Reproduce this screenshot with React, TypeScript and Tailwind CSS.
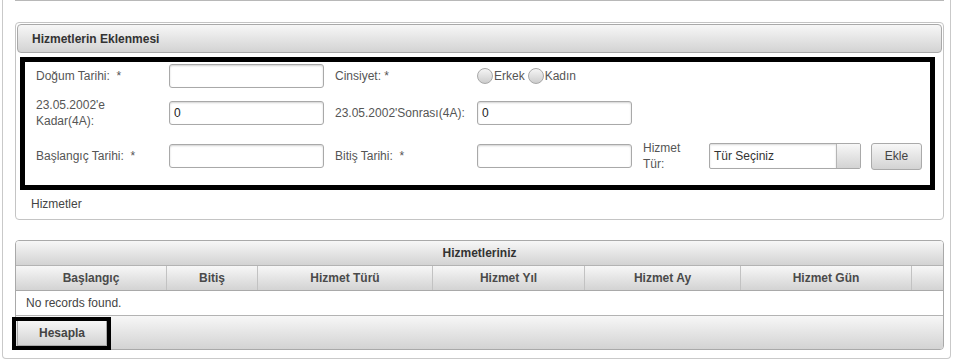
const grad = 'bg-linear-to-b from-[#f7f7f7] to-[#d3d3d3]';

function TextInput({ value }: { value?: string }) {
  return (
    <div className="flex h-[24px] w-[155px] items-center rounded-[3px] border border-[#a9a9a9] bg-white pl-[4px] text-[12px] text-[#222] shadow-[inset_0_1px_2px_rgba(0,0,0,0.18)]">
      {value}
    </div>
  );
}

function Label({ children, w, className = '' }: { children: React.ReactNode; w: string; className?: string }) {
  return <div className={`${w} ${className} whitespace-pre leading-[16px] text-[12px] text-[#555]`}>{children}</div>;
}

function Radio({ label }: { label: string }) {
  return (
    <div className="flex items-center">
      <span className="h-[16px] w-[16px] rounded-full border border-[#a8a8a8] bg-linear-to-b from-[#f5f5f5] to-[#cdcdcd]" />
      <span className="ml-px text-[12px] text-[#555]">{label}</span>
    </div>
  );
}

const columns = [
  { label: 'Başlangıç', w: 'w-[151px]' },
  { label: 'Bitiş', w: 'w-[91px]' },
  { label: 'Hizmet Türü', w: 'w-[175px]' },
  { label: 'Hizmet Yıl', w: 'w-[152px]' },
  { label: 'Hizmet Ay', w: 'w-[156px]' },
  { label: 'Hizmet Gün', w: 'w-[171px]' },
];

export default function App() {
  return (
    <div className="h-[360px] w-[960px] overflow-hidden bg-white font-['Liberation_Sans',Arial,sans-serif]">
      <div className="ml-[2px] h-[359px] w-[949px] rounded-b-[4px] border-x border-b border-[#c9c9c9]">
        {/* bottom edge of the panel above */}
        <div className="ml-[12px] h-px w-[929px] bg-[#b8b8b8]" />

        {/* Hizmetlerin Eklenmesi */}
        <div className="ml-[12px] mt-[21px] h-[198px] w-[929px] rounded-[4px] border border-[#c4c4c4] p-px">
          <div className={`flex h-[29px] items-center rounded-[4px] border border-[#a9a9a9] pl-[14px] text-[12px] font-bold text-[#333] ${grad}`}>
            Hizmetlerin Eklenmesi
          </div>

          <div className="ml-[3px] mt-[4px] h-[133px] w-[915px] border-[5px] border-black pl-[11px] pt-[2px]">
            <div className="flex h-[24px] items-center">
              <Label w="w-[133px]">{'Doğum Tarihi:  *'}</Label>
              <TextInput />
              <Label w="w-[142px]" className="ml-[11px]">{'Cinsiyet: *'}</Label>
              <div className="flex items-center gap-[3px]">
                <Radio label="Erkek" />
                <Radio label="Kadın" />
              </div>
            </div>

            <div className="mt-[9px] flex h-[32px] items-center">
              <Label w="w-[133px]">
                {"23.05.2002'e"}
                <br />
                {'Kadar(4A):'}
              </Label>
              <TextInput value="0" />
              <Label w="w-[142px]" className="ml-[11px]">{"23.05.2002'Sonrası(4A):"}</Label>
              <TextInput value="0" />
            </div>

            <div className="mt-[11px] flex h-[32px] items-center">
              <Label w="w-[133px]">{'Başlangıç Tarihi:  *'}</Label>
              <TextInput />
              <Label w="w-[142px]" className="ml-[11px]">{'Bitiş Tarihi:  *'}</Label>
              <TextInput />
              <Label w="w-[66px]" className="ml-[11px]">
                {'Hizmet'}
                <br />
                {'Tür:'}
              </Label>
              <div className="flex h-[26px] w-[152px] overflow-hidden rounded-[2px] border border-[#a9a9a9] bg-white">
                <div className="flex flex-1 items-center pl-[4px] text-[12px] text-[#333] shadow-[inset_0_1px_2px_rgba(0,0,0,0.15)]">
                  Tür Seçiniz
                </div>
                <div className={`w-[24px] border-l border-[#b5b5b5] ${grad}`} />
              </div>
              <button className={`ml-[10px] h-[27px] w-[51px] rounded-[3px] border border-[#aaaaaa] text-[12px] text-[#444] ${grad}`}>
                Ekle
              </button>
            </div>
          </div>

          <div className="mt-[6px] pl-[14px] text-[12px] leading-[16px] text-[#444]">Hizmetler</div>
        </div>

        {/* Hizmetleriniz */}
        <div className="relative ml-[12px] mt-[20px] flex h-[110px] w-[929px] flex-col rounded-[4px] border border-[#a9a9a9]">
          <div className={`flex h-[25px] items-center justify-center rounded-t-[3px] border-b border-[#b3b3b3] text-[12px] font-bold text-[#333] ${grad}`}>
            Hizmetleriniz
          </div>
          <div className={`flex h-[25px] border-b border-[#a9a9a9] ${grad}`}>
            {columns.map((c) => (
              <div
                key={c.label}
                className={`${c.w} flex items-center justify-center border-r border-[#c2c2c2] text-[12px] font-bold text-[#4a4a4a]`}
              >
                {c.label}
              </div>
            ))}
            <div className="flex-1" />
          </div>
          <div className="flex h-[25px] items-center border-b border-[#b3b3b3] bg-white pl-[10px] text-[12px] text-[#444]">
            No records found.
          </div>
          <div className={`flex flex-1 items-center rounded-b-[3px] pl-px ${grad}`}>
            <button className={`h-[26px] w-[90px] border border-[#a9a9a9] text-[12px] font-bold text-[#444] ${grad}`}>
              Hesapla
            </button>
          </div>
          {/* highlight frame round the button */}
          <div className="pointer-events-none absolute left-[-4px] top-[76px] h-[33px] w-[99px] border-4 border-black" />
        </div>
      </div>
    </div>
  );
}
